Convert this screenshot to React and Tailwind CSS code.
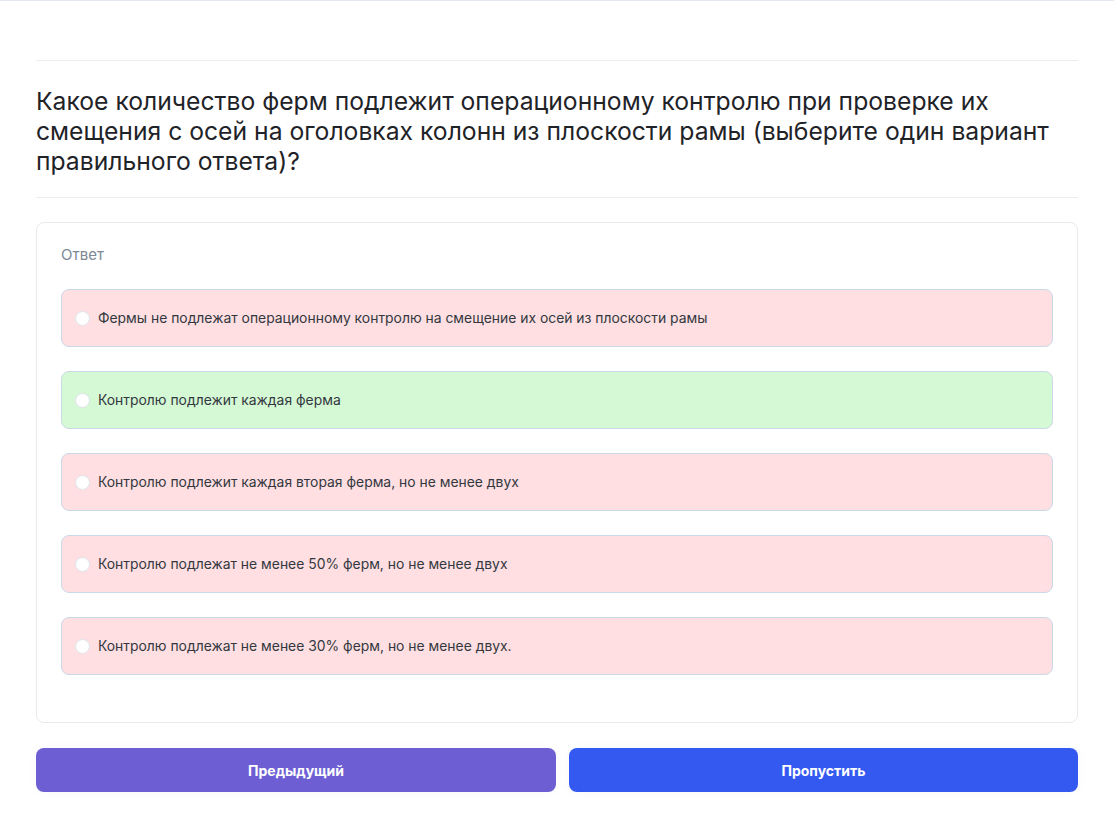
const question =
  'Какое количество ферм подлежит операционному контролю при проверке их смещения с осей на оголовках колонн из плоскости рамы (выберите один вариант правильного ответа)?';

const options = [
  { text: 'Фермы не подлежат операционному контролю на смещение их осей из плоскости рамы', correct: false },
  { text: 'Контролю подлежит каждая ферма', correct: true },
  { text: 'Контролю подлежит каждая вторая ферма, но не менее двух', correct: false },
  { text: 'Контролю подлежат не менее 50% ферм, но не менее двух', correct: false },
  { text: 'Контролю подлежат не менее 30% ферм, но не менее двух.', correct: false },
];

const Option = ({ text, correct }) => (
  <label
    className={`flex h-[58px] items-center gap-[8px] rounded-lg border border-[#c9d9ea] px-[13px] ${
      correct ? 'bg-[#d5f8d5]' : 'bg-[#ffdfe1]'
    }`}
  >
    <span className="h-[15px] w-[15px] shrink-0 rounded-full border border-[#dde3ea] bg-white" />
    <span className="text-[13.9px] text-[#333840]">{text}</span>
  </label>
);

export default function App() {
  return (
    <div
      className="min-h-screen border-t border-[#e3e8ef] bg-white px-9"
      style={{ fontFamily: 'Inter, "Noto Sans", sans-serif' }}
    >
      <div className="pt-[59px]">
        <div className="border-t border-[#e9edf2]" />
        <h1 className="pt-[25px] pb-[21px] text-[24.7px] leading-[30px] font-normal text-[#1f2328]">
          {question}
        </h1>
        <div className="border-t border-[#e9edf2]" />

        <div className="mt-6 rounded-lg border border-[#e6ebf0] px-6 pt-[22px] pb-[47px]">
          <div className="text-[15px] leading-5 text-[#7d8894]">Ответ</div>
          <div className="mt-[24px] flex flex-col gap-[24px]">
            {options.map(opt => (
              <Option key={opt.text} {...opt} />
            ))}
          </div>
        </div>

        <div className="mt-[25px] flex gap-[13px]">
          <button className="h-11 w-[520px] rounded-lg bg-[#6d5fd3] text-[14px] font-bold text-white shadow-[0_0_12px_rgba(0,0,0,0.03)]">
            Предыдущий
          </button>
          <button className="h-11 flex-1 rounded-lg bg-[#3459f0] text-[14px] font-bold text-white shadow-[0_0_12px_rgba(0,0,0,0.03)]">
            Пропустить
          </button>
        </div>
      </div>
    </div>
  );
}
